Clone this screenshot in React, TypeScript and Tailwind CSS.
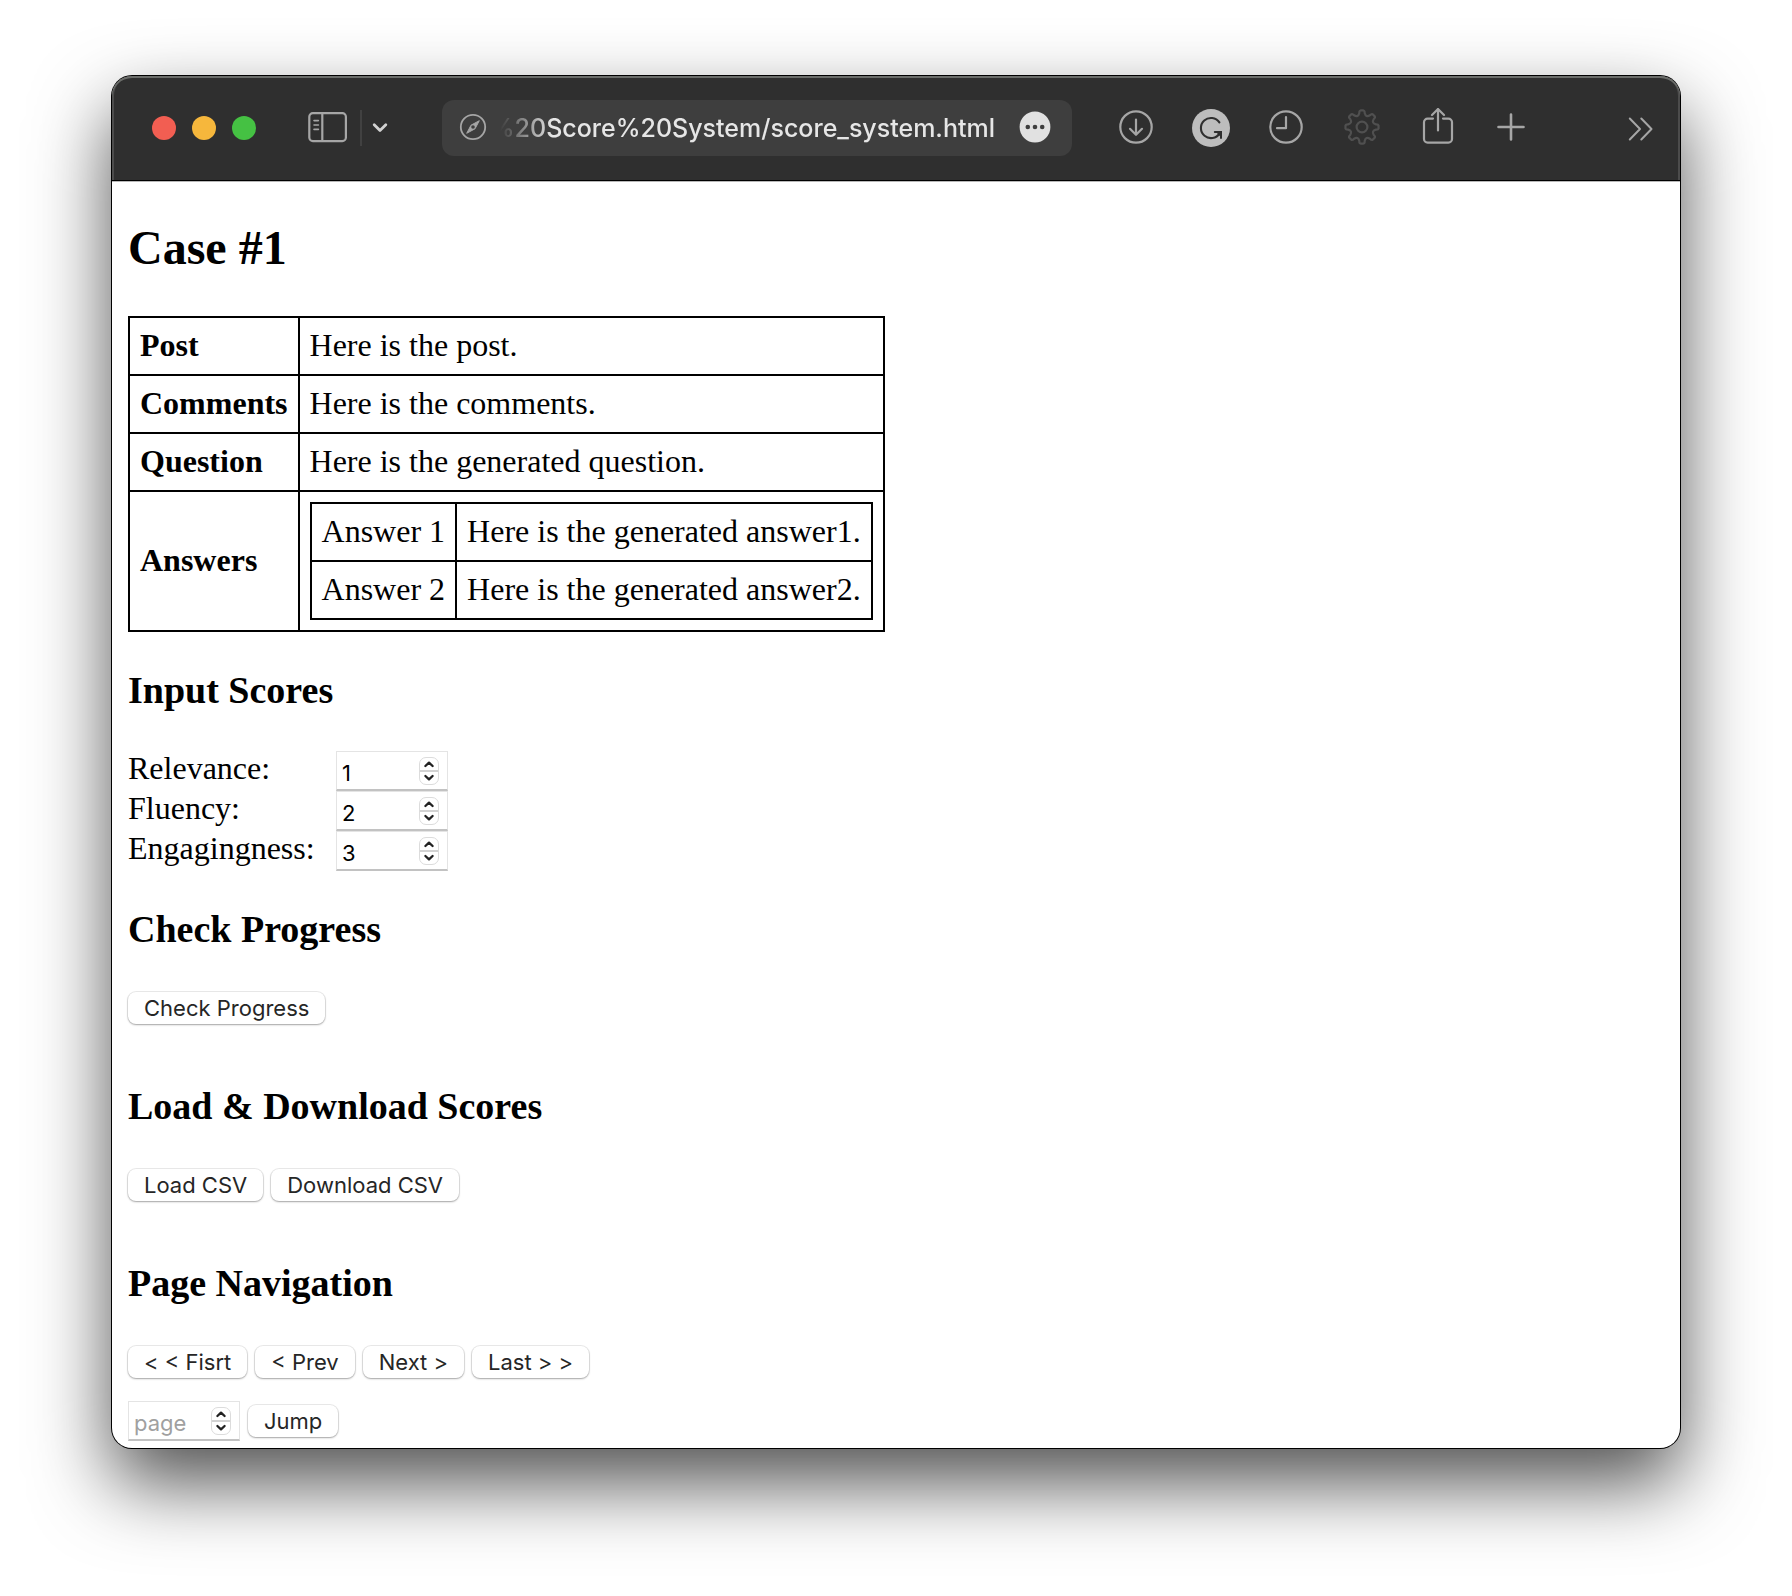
import { useState, type ReactNode } from "react";

const posts = [
  { name: "Post", text: "Here is the post." },
  { name: "Comments", text: "Here is the comments." },
  { name: "Question", text: "Here is the generated question." },
];

const answers = [
  { name: "Answer 1", text: "Here is the generated answer1." },
  { name: "Answer 2", text: "Here is the generated answer2." },
];

function ToolButton({ label, width = "w-10", children }: { label: string; width?: string; children: ReactNode }) {
  return (
    <button type="button" aria-label={label} className={`flex h-10 shrink-0 items-center justify-center ${width}`}>
      {children}
    </button>
  );
}

// Closed curve of eight rounded teeth around (20, 19).
function gearPath() {
  const teeth = 8;
  const at = (angle: number, r: number) =>
    `${(20 + r * Math.cos(angle)).toFixed(2)} ${(19 + r * Math.sin(angle)).toFixed(2)}`;
  let d = "";
  for (let i = 0; i < teeth; i++) {
    const base = (i / teeth) * Math.PI * 2 - Math.PI / 2;
    const next = base + (Math.PI * 2) / teeth;
    d += `${i === 0 ? "M" : "L"}${at(base - 0.09, 16.6)}L${at(base + 0.09, 16.6)}`;
    d += `Q${at(base + 0.17, 16.5)} ${at(base + 0.19, 14.2)}`;
    d += `Q${at((base + next) / 2, 10)} ${at(next - 0.19, 14.2)}`;
    d += `Q${at(next - 0.17, 16.5)} ${at(next - 0.09, 16.6)}`;
  }
  return `${d}Z`;
}

function Toolbar() {
  return (
    <header className="flex h-[104px] items-center rounded-t-[20px] bg-[#2f2f2f] pr-[19px] pl-10 text-[#a6a6a6] shadow-[inset_0_2px_0_#6b6d6a,inset_2px_0_0_#4c4c4c,inset_-2px_0_0_#4c4c4c]">
      <div className="flex shrink-0 gap-4">
        <button type="button" aria-label="Close" className="size-6 rounded-full bg-[#f25e52]" />
        <button type="button" aria-label="Minimize" className="size-6 rounded-full bg-[#f6b73c]" />
        <button type="button" aria-label="Zoom" className="size-6 rounded-full bg-[#45c143]" />
      </div>
      <button type="button" aria-label="Sidebar" className="ml-[52px] shrink-0">
        <svg width="40" height="32" viewBox="0 0 40 32" fill="none" stroke="currentColor" strokeWidth="2.2" strokeLinecap="round">
          <rect x="1.3" y="1.1" width="36.6" height="28" rx="3.6" />
          <path d="M14.3 1v28" />
          <path d="M6 8.6h4.4M6 13h4.4M6 17.4h4.4" strokeWidth="1.6" />
        </svg>
      </button>
      <div className="ml-3 h-9 w-0.5 shrink-0 bg-[#414141]" />
      <button type="button" aria-label="Tab groups" className="ml-2.5 shrink-0 text-[#d2d2d2]">
        <svg width="16" height="12" viewBox="0 0 16 12" fill="none" stroke="currentColor" strokeWidth="2.8" strokeLinecap="round" strokeLinejoin="round">
          <path d="M2.2 2.8L8 8.6l5.8-5.8" />
        </svg>
      </button>
      <div className="ml-[54px] flex h-14 min-w-0 flex-1 items-center rounded-xl bg-[#3e3e3e] pr-[21px] pl-4">
        <svg className="shrink-0" width="30" height="30" viewBox="0 0 30 30" fill="none" stroke="currentColor" strokeWidth="1.8">
          <circle cx="15" cy="14" r="12.2" />
          <path d="M21.3 7.7L17 15.8 8.7 20.3 13 12.2z" fill="currentColor" strokeWidth="1" strokeLinejoin="round" />
          <circle cx="15" cy="14" r="1.8" fill="#3e3e3e" stroke="none" />
        </svg>
        <input
          type="text"
          aria-label="Address"
          defaultValue="%20Score%20System/score_system.html"
          className="min-w-0 flex-1 bg-transparent pt-0.5 pr-6 text-right font-['Inter',sans-serif] text-[25px] font-medium text-[#e6e6e6] outline-none [mask-image:linear-gradient(to_right,transparent_12px,black_64px)]"
        />
        <button type="button" aria-label="Page menu" className="shrink-0">
          <svg width="32" height="34" viewBox="0 0 32 34">
            <circle cx="16" cy="16" r="15.4" fill="#e1e1e1" />
            <g fill="#3e3e3e">
              <circle cx="8.8" cy="16" r="2.3" />
              <circle cx="16" cy="16" r="2.3" />
              <circle cx="23.2" cy="16" r="2.3" />
            </g>
          </svg>
        </button>
      </div>
      <nav aria-label="Toolbar" className="ml-11 flex shrink-0 items-center gap-[35px]">
        <ToolButton label="Downloads">
          <svg width="40" height="40" viewBox="0 0 40 40" fill="none" stroke="currentColor" strokeWidth="2.2" strokeLinecap="round" strokeLinejoin="round">
            <circle cx="20" cy="19" r="15.7" />
            <path d="M20 11.5v15M14 20.8l6 6 6-6" />
          </svg>
        </ToolButton>
        <ToolButton label="Grammar">
          <svg width="40" height="40" viewBox="0 0 40 40" fill="none">
            <circle cx="20" cy="20" r="19" fill="#bdbdbd" />
            <path d="M28.4 14.4A10.1 10.1 0 1 0 28.6 25.4" stroke="#2f2f2f" strokeWidth="2.1" strokeLinecap="round" />
            <path d="M23.8 24h6.2v6" stroke="#2f2f2f" strokeWidth="2" strokeLinecap="round" />
            <path d="M25 24h5.6v6z" fill="#2f2f2f" />
          </svg>
        </ToolButton>
        <ToolButton label="History">
          <svg width="40" height="40" viewBox="0 0 40 40" fill="none" stroke="currentColor" strokeWidth="2.2" strokeLinecap="round" strokeLinejoin="round">
            <circle cx="20" cy="19" r="15.7" />
            <path d="M20 9v11.2h-9" />
          </svg>
        </ToolButton>
        <ToolButton label="Settings" width="w-[42px]">
          <svg width="40" height="40" viewBox="0 0 40 40" fill="none" stroke="#505050" strokeWidth="2.2" strokeLinejoin="round">
            <path d={gearPath()} />
            <circle cx="20" cy="19" r="5.4" />
          </svg>
        </ToolButton>
        <ToolButton label="Share">
          <svg width="40" height="40" viewBox="0 0 40 40" fill="none" stroke="currentColor" strokeWidth="2.2" strokeLinecap="round" strokeLinejoin="round">
            <path d="M15 10.6H9.6a3.6 3.6 0 0 0-3.6 3.6V31a3.6 3.6 0 0 0 3.6 3.6h20.8A3.6 3.6 0 0 0 34 31V14.2a3.6 3.6 0 0 0-3.6-3.6H25" />
            <path d="M20 22.5V1M14 7L20 1l6 6" />
          </svg>
        </ToolButton>
        <ToolButton label="New tab" width="w-9">
          <svg width="30" height="32" viewBox="0 0 30 32" fill="none" stroke="currentColor" strokeWidth="2.6" strokeLinecap="round">
            <path d="M15 2.5v25M2.5 15h25" />
          </svg>
        </ToolButton>
      </nav>
      <div className="ml-[92px] flex shrink-0">
        <ToolButton label="More">
          <svg width="28" height="28" viewBox="0 0 28 28" fill="none" stroke="currentColor" strokeWidth="2" strokeLinecap="round" strokeLinejoin="round">
            <path d="M2.8 4.5L13 15 2.8 25.5M14.3 4.5L24.5 15 14.3 25.5" />
          </svg>
        </ToolButton>
      </div>
    </header>
  );
}

function NumberField({ id, initial = "", placeholder, label }: { id: string; initial?: string; placeholder?: string; label?: string }) {
  const [value, setValue] = useState(initial);
  const step = (by: number) => setValue(String((Number(value) || 0) + by));
  return (
    <div className="flex h-10 w-28 items-center border border-b-2 border-[#e4e4e4] border-b-[#c2c2c2] bg-white pr-2 pl-[5px]">
      <input
        id={id}
        type="number"
        aria-label={label}
        placeholder={placeholder}
        value={value}
        onChange={(e) => setValue(e.target.value)}
        className="min-w-0 flex-1 appearance-none bg-transparent pt-1 font-['Inter',sans-serif] text-[22px] leading-7 text-black outline-none [appearance:textfield] placeholder:text-[#a0a0a0]"
      />
      <div className="flex h-7 w-5 shrink-0 flex-col divide-y-2 divide-[#d2d2d2] overflow-hidden rounded-[7px] border border-[#dcdcdc] text-[#222]">
        <button type="button" aria-label="Increase" onClick={() => step(1)} className="flex flex-1 items-center justify-center">
          <svg width="12" height="8" viewBox="0 0 12 8" fill="none" stroke="currentColor" strokeWidth="2.3" strokeLinecap="round" strokeLinejoin="round">
            <path d="M2.4 6L6 2.6 9.6 6" />
          </svg>
        </button>
        <button type="button" aria-label="Decrease" onClick={() => step(-1)} className="flex flex-1 items-center justify-center">
          <svg width="12" height="8" viewBox="0 0 12 8" fill="none" stroke="currentColor" strokeWidth="2.3" strokeLinecap="round" strokeLinejoin="round">
            <path d="M2.4 2L6 5.4 9.6 2" />
          </svg>
        </button>
      </div>
    </div>
  );
}

function PushButton({ children }: { children: ReactNode }) {
  return (
    <button
      type="button"
      className="h-8 rounded-lg bg-white px-4 font-['Inter',sans-serif] text-[22px] leading-8 whitespace-nowrap text-[#262626] shadow-[0_0_0_1px_rgba(0,0,0,0.08),0_1px_2px_rgba(0,0,0,0.3)]"
    >
      {children}
    </button>
  );
}

function SectionTitle({ children }: { children: ReactNode }) {
  return <h3 className="mt-[37px] mb-10 text-[38px] leading-[42px] font-bold">{children}</h3>;
}

export default function App() {
  return (
    <div className="bg-white px-28 pt-[76px] pb-[148px]">
      <div className="rounded-[20px] bg-white shadow-[0_0_0_1px_#000,0_35px_78px_rgba(0,0,0,0.69)]">
        <Toolbar />
        <div className="h-0.5 border-t border-b border-t-black border-b-[#b8b8b8]" />
        <main className="px-4 pb-[7px] font-['Liberation_Serif',serif] text-[32px] leading-9 text-black">
          <h2 className="pt-[38px] text-5xl leading-14 font-bold">Case #1</h2>
          <table className="mt-10 border-collapse border-2 border-black">
            <tbody>
              {posts.map((row) => (
                <tr key={row.name}>
                  <th scope="row" className="border-2 border-black px-2.5 pt-[9px] pb-[11px] text-left">{row.name}</th>
                  <td className="border-2 border-black px-2.5 pt-[9px] pb-[11px]">{row.text}</td>
                </tr>
              ))}
              <tr>
                <th scope="row" className="border-2 border-black px-2.5 pt-[9px] pb-[11px] text-left">Answers</th>
                <td className="border-2 border-black p-2.5">
                  <table className="border-collapse border-2 border-black">
                    <tbody>
                      {answers.map((row) => (
                        <tr key={row.name}>
                          <td className="border-2 border-black px-2.5 pt-[9px] pb-[11px]">{row.name}</td>
                          <td className="border-2 border-black px-2.5 pt-[9px] pb-[11px]">{row.text}</td>
                        </tr>
                      ))}
                    </tbody>
                  </table>
                </td>
              </tr>
            </tbody>
          </table>

          <SectionTitle>Input Scores</SectionTitle>
          <form className="grid grid-cols-[208px_auto] justify-start leading-[34px]">
            <label htmlFor="relevance">Relevance:</label>
            <NumberField id="relevance" initial="1" />
            <label htmlFor="fluency">Fluency:</label>
            <NumberField id="fluency" initial="2" />
            <label htmlFor="engagingness">Engagingness:</label>
            <NumberField id="engagingness" initial="3" />
          </form>

          <SectionTitle>Check Progress</SectionTitle>
          <div className="flex gap-2 pt-[2px] pb-6">
            <PushButton>Check Progress</PushButton>
          </div>

          <SectionTitle>Load &amp; Download Scores</SectionTitle>
          <div className="flex gap-2 pt-[2px] pb-6">
            <PushButton>Load CSV</PushButton>
            <PushButton>Download CSV</PushButton>
          </div>

          <SectionTitle>Page Navigation</SectionTitle>
          <div className="flex gap-2 pt-[2px] pb-[23px]">
            <PushButton>&lt; &lt; Fisrt</PushButton>
            <PushButton>&lt; Prev</PushButton>
            <PushButton>Next &gt;</PushButton>
            <PushButton>Last &gt; &gt;</PushButton>
          </div>
          <div className="flex items-center gap-2">
            <NumberField id="page" placeholder="page" label="Page" />
            <PushButton>Jump</PushButton>
          </div>
        </main>
      </div>
    </div>
  );
}
